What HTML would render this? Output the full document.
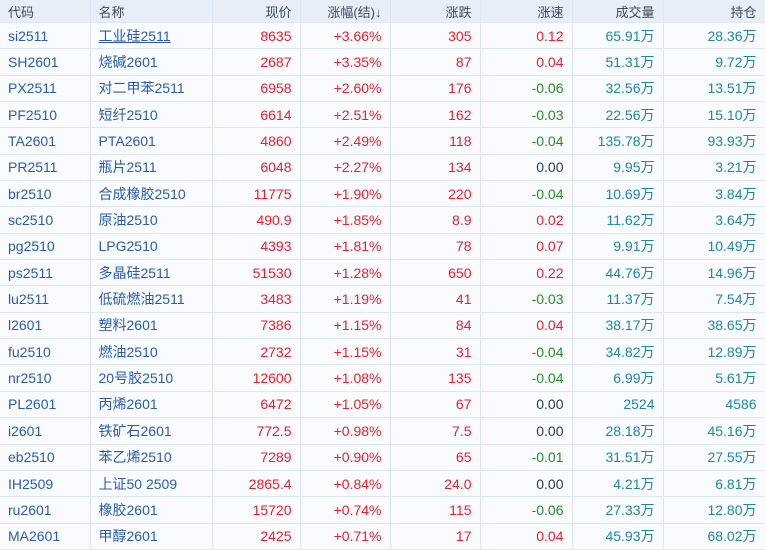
<!DOCTYPE html>
<html><head><meta charset="utf-8"><style>
body{margin:0;width:765px;height:549px;overflow:hidden;background:#f9fbfe;font-family:"Liberation Sans","Noto Sans CJK SC",sans-serif;font-size:14px}
table{border-collapse:collapse;table-layout:fixed;width:765px}
td,th{border-right:1px solid #dde6f3;border-bottom:1px solid #dde6f3;padding:0 8px 0 0;text-align:right;white-space:nowrap;overflow:hidden}
th{height:22px;background:#e7eef8;color:#3d4a5c;font-weight:normal;font-size:13px}
td{height:25.35px}
th.l,td.l{text-align:left;padding-left:8px}
.c{color:#2a5cae}.r{color:#e5222e}.g{color:#25901f}.t{color:#1f88a2}.k{color:#2b3a55}
</style></head><body>
<table>
<colgroup><col style="width:90px"><col style="width:122px"><col style="width:88px"><col style="width:90px"><col style="width:90px"><col style="width:92px"><col style="width:91px"><col style="width:102px"></colgroup>
<tr><th class="l">代码</th><th class="l">名称</th><th>现价</th><th>涨幅(结)↓</th><th>涨跌</th><th>涨速</th><th>成交量</th><th>持仓</th></tr>
<tr><td class="l c">si2511</td><td class="l c" style="text-decoration:underline">工业硅2511</td><td class="r">8635</td><td class="r">+3.66%</td><td class="r">305</td><td class="r">0.12</td><td class="t">65.91万</td><td class="t">28.36万</td></tr>
<tr><td class="l c">SH2601</td><td class="l c">烧碱2601</td><td class="r">2687</td><td class="r">+3.35%</td><td class="r">87</td><td class="r">0.04</td><td class="t">51.31万</td><td class="t">9.72万</td></tr>
<tr><td class="l c">PX2511</td><td class="l c">对二甲苯2511</td><td class="r">6958</td><td class="r">+2.60%</td><td class="r">176</td><td class="g">-0.06</td><td class="t">32.56万</td><td class="t">13.51万</td></tr>
<tr><td class="l c">PF2510</td><td class="l c">短纤2510</td><td class="r">6614</td><td class="r">+2.51%</td><td class="r">162</td><td class="g">-0.03</td><td class="t">22.56万</td><td class="t">15.10万</td></tr>
<tr><td class="l c">TA2601</td><td class="l c">PTA2601</td><td class="r">4860</td><td class="r">+2.49%</td><td class="r">118</td><td class="g">-0.04</td><td class="t">135.78万</td><td class="t">93.93万</td></tr>
<tr><td class="l c">PR2511</td><td class="l c">瓶片2511</td><td class="r">6048</td><td class="r">+2.27%</td><td class="r">134</td><td class="k">0.00</td><td class="t">9.95万</td><td class="t">3.21万</td></tr>
<tr><td class="l c">br2510</td><td class="l c">合成橡胶2510</td><td class="r">11775</td><td class="r">+1.90%</td><td class="r">220</td><td class="g">-0.04</td><td class="t">10.69万</td><td class="t">3.84万</td></tr>
<tr><td class="l c">sc2510</td><td class="l c">原油2510</td><td class="r">490.9</td><td class="r">+1.85%</td><td class="r">8.9</td><td class="r">0.02</td><td class="t">11.62万</td><td class="t">3.64万</td></tr>
<tr><td class="l c">pg2510</td><td class="l c">LPG2510</td><td class="r">4393</td><td class="r">+1.81%</td><td class="r">78</td><td class="r">0.07</td><td class="t">9.91万</td><td class="t">10.49万</td></tr>
<tr><td class="l c">ps2511</td><td class="l c">多晶硅2511</td><td class="r">51530</td><td class="r">+1.28%</td><td class="r">650</td><td class="r">0.22</td><td class="t">44.76万</td><td class="t">14.96万</td></tr>
<tr><td class="l c">lu2511</td><td class="l c">低硫燃油2511</td><td class="r">3483</td><td class="r">+1.19%</td><td class="r">41</td><td class="g">-0.03</td><td class="t">11.37万</td><td class="t">7.54万</td></tr>
<tr><td class="l c">l2601</td><td class="l c">塑料2601</td><td class="r">7386</td><td class="r">+1.15%</td><td class="r">84</td><td class="r">0.04</td><td class="t">38.17万</td><td class="t">38.65万</td></tr>
<tr><td class="l c">fu2510</td><td class="l c">燃油2510</td><td class="r">2732</td><td class="r">+1.15%</td><td class="r">31</td><td class="g">-0.04</td><td class="t">34.82万</td><td class="t">12.89万</td></tr>
<tr><td class="l c">nr2510</td><td class="l c">20号胶2510</td><td class="r">12600</td><td class="r">+1.08%</td><td class="r">135</td><td class="g">-0.04</td><td class="t">6.99万</td><td class="t">5.61万</td></tr>
<tr><td class="l c">PL2601</td><td class="l c">丙烯2601</td><td class="r">6472</td><td class="r">+1.05%</td><td class="r">67</td><td class="k">0.00</td><td class="t">2524</td><td class="t">4586</td></tr>
<tr><td class="l c">i2601</td><td class="l c">铁矿石2601</td><td class="r">772.5</td><td class="r">+0.98%</td><td class="r">7.5</td><td class="k">0.00</td><td class="t">28.18万</td><td class="t">45.16万</td></tr>
<tr><td class="l c">eb2510</td><td class="l c">苯乙烯2510</td><td class="r">7289</td><td class="r">+0.90%</td><td class="r">65</td><td class="g">-0.01</td><td class="t">31.51万</td><td class="t">27.55万</td></tr>
<tr><td class="l c">IH2509</td><td class="l c">上证50 2509</td><td class="r">2865.4</td><td class="r">+0.84%</td><td class="r">24.0</td><td class="k">0.00</td><td class="t">4.21万</td><td class="t">6.81万</td></tr>
<tr><td class="l c">ru2601</td><td class="l c">橡胶2601</td><td class="r">15720</td><td class="r">+0.74%</td><td class="r">115</td><td class="g">-0.06</td><td class="t">27.33万</td><td class="t">12.80万</td></tr>
<tr><td class="l c">MA2601</td><td class="l c">甲醇2601</td><td class="r">2425</td><td class="r">+0.71%</td><td class="r">17</td><td class="r">0.04</td><td class="t">45.93万</td><td class="t">68.02万</td></tr>
</table>
</body></html>
